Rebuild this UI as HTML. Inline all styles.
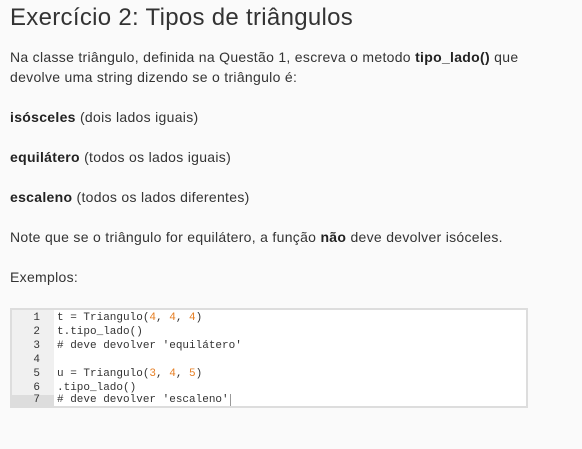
<!DOCTYPE html>
<html><head><meta charset="utf-8"><style>
body{margin:0;background:#fafafa;width:582px;height:449px;overflow:hidden;font-family:"Liberation Sans",sans-serif;color:#333;}
h1{position:absolute;left:10px;top:4px;margin:0;font-weight:normal;font-size:24px;color:#333;letter-spacing:0.3px}
.p{position:absolute;left:10px;font-size:14px;line-height:20px;letter-spacing:0.3px;white-space:nowrap}
b{color:#222}
.code{position:absolute;left:10px;top:308px;width:514px;height:96px;border:2px solid #ddd;background:#fff;font-family:"Liberation Mono",monospace;font-size:11px;white-space:nowrap}
.g{position:absolute;left:0;top:0;width:42px;height:96px;background:#f0f0f0}
.ln{position:absolute;left:0;height:14px;line-height:14px;width:514px}
.ln .n{display:inline-block;width:28px;text-align:right;color:#333}
.ln .c{position:absolute;left:45px;color:#333;white-space:nowrap}
.o{color:#e67e22}.cm{color:#888}
</style></head><body>
<h1>Exercício 2: Tipos de triângulos</h1>
<div class="p" style="top:47px">Na classe triângulo, definida na Questão 1, escreva o metodo <b>tipo_lado()</b> que<br>devolve uma string dizendo se o triângulo é:</div>
<div class="p" style="top:107px"><b>isósceles</b> (dois lados iguais)</div>
<div class="p" style="top:147px"><b>equilátero</b> (todos os lados iguais)</div>
<div class="p" style="top:187px"><b>escaleno</b> (todos os lados diferentes)</div>
<div class="p" style="top:227px">Note que se o triângulo for equilátero, a função <b>não</b> deve devolver isóceles.</div>
<div class="p" style="top:267px">Exemplos:</div>
<div class="code"><div class="g"></div>
<div class="ln" style="top:1px"><span class="n">1</span><span class="c">t = Triangulo(<span class="o">4</span>, <span class="o">4</span>, <span class="o">4</span>)</span></div>
<div class="ln" style="top:15px"><span class="n">2</span><span class="c">t.tipo_lado()</span></div>
<div class="ln" style="top:29px"><span class="n">3</span><span class="c cm"># deve devolver 'equilátero'</span></div>
<div class="ln" style="top:43px"><span class="n">4</span></div>
<div class="ln" style="top:57px"><span class="n">5</span><span class="c">u = Triangulo(<span class="o">3</span>, <span class="o">4</span>, <span class="o">5</span>)</span></div>
<div class="ln" style="top:71px"><span class="n">6</span><span class="c">.tipo_lado()</span></div>
<div class="ln" style="top:85px;height:11px;line-height:11px"><span class="n" style="background:#ddd;width:42px;padding-right:14px;box-sizing:border-box;">7</span><span class="c cm"># deve devolver 'escaleno'<span style="border-left:1px solid #999;margin-left:1px"></span></span></div>
</div>
</body></html>
